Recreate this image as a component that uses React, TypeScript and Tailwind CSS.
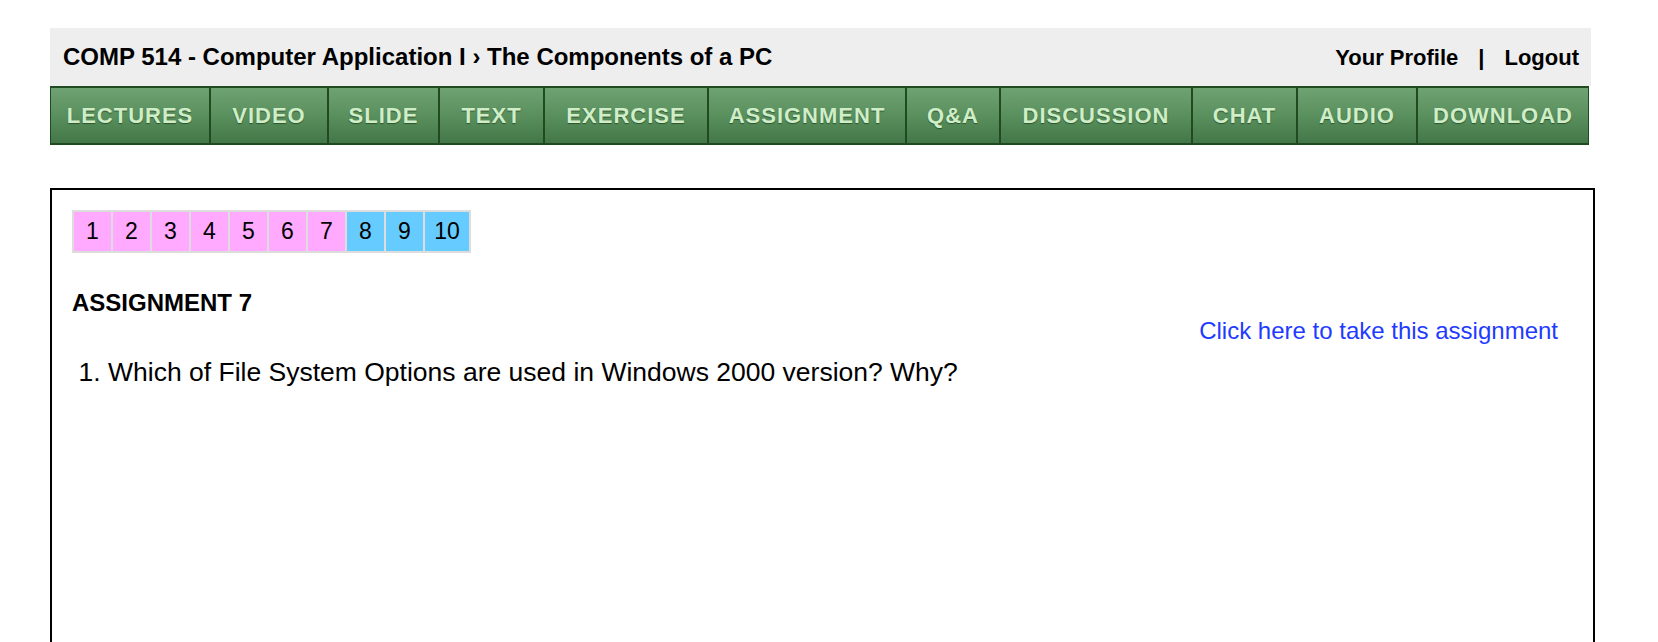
import React from "react";

const navItems = [
  { label: "LECTURES", w: "w-[160px]" },
  { label: "VIDEO", w: "w-[118px]" },
  { label: "SLIDE", w: "w-[111px]" },
  { label: "TEXT", w: "w-[105px]" },
  { label: "EXERCISE", w: "w-[164px]" },
  { label: "ASSIGNMENT", w: "w-[198px]" },
  { label: "Q&A", w: "w-[94px]" },
  { label: "DISCUSSION", w: "w-[192px]" },
  { label: "CHAT", w: "w-[105px]" },
  { label: "AUDIO", w: "w-[120px]" },
  { label: "DOWNLOAD", w: "flex-1" },
];

const pages = [
  { n: "1", done: true },
  { n: "2", done: true },
  { n: "3", done: true },
  { n: "4", done: true },
  { n: "5", done: true },
  { n: "6", done: true },
  { n: "7", done: true },
  { n: "8", done: false },
  { n: "9", done: false },
  { n: "10", done: false },
];

const App: React.FC = () => {
  return (
    <div className="min-h-screen bg-white font-['Liberation_Sans',Arial,sans-serif] text-black pt-[28px] pl-[50px]">
      <div className="w-[1541px]">
        <div className="h-[58px] bg-[#eeeeee] flex items-center justify-between pl-[13px] pr-[12px]">
          <div className="text-[24px] font-bold">
            COMP 514 - Computer Application I › The Components of a PC
          </div>
          <div className="flex items-center text-[22px] font-bold">
            <a className="cursor-pointer">Your Profile</a>
            <span className="mx-[20px]">|</span>
            <a className="cursor-pointer">Logout</a>
          </div>
        </div>
      </div>

      <div className="w-[1539px] h-[59px] flex border-y-2 border-[#1f4a22] bg-[#1f4a22]">
        {navItems.map((item) => (
          <div
            key={item.label}
            className={`${item.w} h-full flex items-center justify-center border-x border-[#1f4a22] bg-gradient-to-b from-[#6fa272] via-[#5a8f5e] to-[#437747] text-[22px] font-bold tracking-[1px] text-[#cfeec8] [text-shadow:0_1px_1px_rgba(20,50,20,0.6)]`}
          >
            {item.label}
          </div>
        ))}
      </div>

      <div className="mt-[43px] w-[1545px] min-h-[520px] border-2 border-black p-[20px]">
        <div className="inline-flex gap-[2px] p-[2px] bg-[#dddddd]">
          {pages.map((p) => (
            <div
              key={p.n}
              className={`${p.n === "10" ? "w-[44px]" : "w-[37px]"} h-[39px] flex items-center justify-center text-[23px] ${
                p.done ? "bg-[#ffaaff]" : "bg-[#66ccff]"
              }`}
            >
              {p.n}
            </div>
          ))}
        </div>

        <h3 className="mt-[36px] text-[24px] leading-[28px] font-bold">ASSIGNMENT 7</h3>

        <div className="flex justify-end pr-[15px]">
          <a className="text-[24px] leading-[28px] text-[#1f3bff] cursor-pointer">
            Click here to take this assignment
          </a>
        </div>

        <ol className="mt-[13px] pl-[36px] list-decimal text-[26.5px] leading-[28px]">
          <li>Which of File System Options are used in Windows 2000 version? Why?</li>
        </ol>
      </div>
    </div>
  );
};

export default App;
